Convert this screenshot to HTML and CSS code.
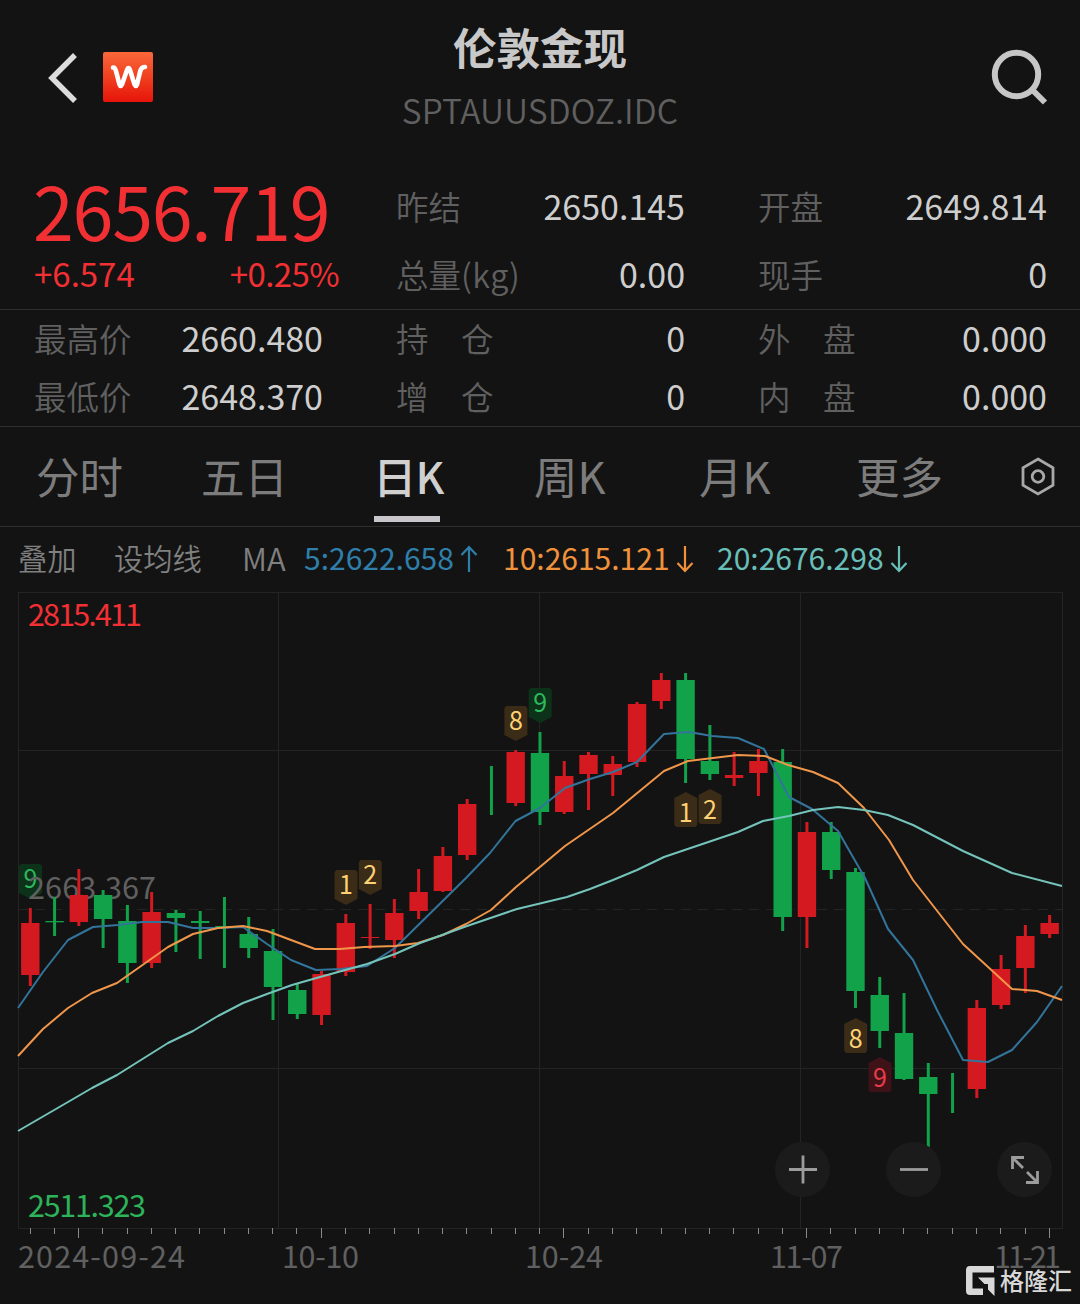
FILE: index.html
```
<!DOCTYPE html>
<html lang="zh-CN">
<head>
    <meta charset="UTF-8">
    <meta name="viewport" content="width=device-width, initial-scale=1.0">
    <title>伦敦金现 SPTAUUSDOZ.IDC</title>
    <link rel="stylesheet" href="styles.css">
</head>
<body>
    <header class="header">
        <div class="header-left">
            <svg class="back" width="32" height="54" viewBox="0 0 32 54">
                <path d="M29 5 L6 28 L29 51" />
            </svg>
            <div class="logo">
                <svg width="50" height="50" viewBox="0 0 50 50">
                    <path d="M10 15.500 C12.500 15 12.500 18 13.500 21 L16.500 32.500 Q17.500 35.500 19 32.500 L24 18 Q25.500 14 27 18 L31.500 32.500 Q33 35.500 34 32.500 L37 20 Q38.300 14.500 42 15" />
                </svg>
            </div>
        </div>
        <div class="header-title">
            <h1>伦敦金现</h1>
            <p>SPTAUUSDOZ.IDC</p>
        </div>
        <svg class="search" width="60" height="60" viewBox="0 0 60 60">
            <circle cx="28.500" cy="26.500" r="21.700" />
            <path d="M43.500 41 L57 54.500" />
        </svg>
    </header>

    <section class="quote quote-main">
        <div class="price-box">
            <div class="price">2656.719</div>
            <div class="change"><span>+6.574</span><span class="percent">+0.25%</span></div>
        </div>
        <div class="item"><span class="label">昨结</span><span class="value">2650.145</span></div>
        <div class="item"><span class="label">开盘</span><span class="value">2649.814</span></div>
        <div class="item"><span class="label">总量<span class="unit">(kg)</span></span><span class="value">0.00</span></div>
        <div class="item"><span class="label">现手</span><span class="value">0</span></div>
    </section>

    <section class="quote quote-more">
        <div class="item"><span class="label">最高价</span><span class="value">2660.480</span></div>
        <div class="item"><span class="label">持　仓</span><span class="value">0</span></div>
        <div class="item"><span class="label">外　盘</span><span class="value">0.000</span></div>
        <div class="item"><span class="label">最低价</span><span class="value">2648.370</span></div>
        <div class="item"><span class="label">增　仓</span><span class="value">0</span></div>
        <div class="item"><span class="label">内　盘</span><span class="value">0.000</span></div>
    </section>

    <nav class="tabs">
        <span class="tab">分时</span>
        <span class="tab">五日</span>
        <span class="tab active">日K</span>
        <span class="tab">周K</span>
        <span class="tab">月K</span>
        <span class="tab">更多</span>
        <svg class="settings" width="36" height="42" viewBox="0 0 36 42">
            <path d="M18 3 L33 11.800 V29.200 L18 38 L3 29.200 V11.800 Z" />
            <circle cx="18" cy="20.500" r="5.800" />
        </svg>
    </nav>

    <div class="ma-bar">
        <span class="ma-btn">叠加</span>
        <span class="ma-btn ma-set">设均线</span>
        <span class="ma-btn ma-name">MA</span>
        <span class="ma ma5">5:2622.658<svg width="18" height="28" viewBox="0 0 18 28"><path d="M9 27 V2 M1.500 10 L9 2 L16.500 10" /></svg></span>
        <span class="ma ma10">10:2615.121<svg width="18" height="28" viewBox="0 0 18 28"><path d="M9 1 V26 M1.500 18 L9 26 L16.500 18" /></svg></span>
        <span class="ma ma20">20:2676.298<svg width="18" height="28" viewBox="0 0 18 28"><path d="M9 1 V26 M1.500 18 L9 26 L16.500 18" /></svg></span>
    </div>

    <main class="chart-box">
        <svg id="chart" width="1080" height="713" viewBox="0 591 1080 713"></svg>

        <div class="controls">
            <button type="button"><svg width="30" height="30" viewBox="0 0 30 30"><path d="M1 14.500 H29 M15 0.500 V28.500" /></svg></button>
            <button type="button"><svg width="30" height="30" viewBox="0 0 30 30"><path d="M1 14.500 H29" /></svg></button>
            <button type="button"><svg width="30" height="30" viewBox="0 0 30 30"><path d="M14 2.500 H2.500 V14 M2.500 2.500 L13 13 M16 27.500 H27.500 V16 M27.500 27.500 L17 17" /></svg></button>
        </div>

        <div class="watermark">
            <svg width="29" height="30" viewBox="0 0 29 30">
                <path d="M4 0 H28 V6.500 H6.500 V22.500 H17 V29 H4 Q0 29 0 25 V4 Q0 0 4 0 Z" />
                <path d="M12 11.500 H28.500 V30 L22 23.500 V18 H18.500 Z" />
            </svg>
            <span>格隆汇</span>
        </div>
    </main>

    <script src="script.js"></script>
</body>
</html>
```
FILE: styles.css
```
* {
    box-sizing: border-box;
}

body {
    margin: 0;
    width: 1080px;
    height: 1304px;
    overflow: hidden;
    background: #131313;
    color: #cecece;
    font-family: "Noto Sans CJK SC", "Noto Sans", sans-serif;
}

svg {
    display: block;
    fill: none;
}

/* header */
.header {
    display: grid;
    grid-template-columns: 300px 1fr 300px;
    height: 173px;
    padding-top: 16px;
}

.header-left {
    display: flex;
    align-items: center;
    height: 122px;
    padding-left: 46px;
    gap: 25px;
}

.back path {
    stroke: #dcdcdc;
    stroke-width: 5.5;
}

.logo {
    width: 50px;
    height: 50px;
    border-radius: 2px;
    background: linear-gradient(#f9683a, #f0401f 50%, #e6140a);
}

.logo path {
    stroke: #fff;
    stroke-width: 4.6;
    stroke-linecap: round;
}

.header-title {
    text-align: center;
}

.header-title h1 {
    margin: 0;
    font-size: 43.5px;
    line-height: 62px;
    font-weight: 700;
    color: #c8c8c8;
}

.header-title p {
    margin: 7px 0 0;
    font-size: 33.5px;
    line-height: 50px;
    font-weight: 350;
    letter-spacing: 0.1px;
    color: #606060;
}

.search {
    justify-self: end;
    margin: 32px 32px 0 0;
    stroke: #c6c6c6;
    stroke-width: 6;
}

/* quotes */
.quote {
    display: grid;
    grid-template-columns: repeat(3, 289px);
    column-gap: 73px;
    padding-left: 34px;
    border-bottom: 1px solid #2e2e2e;
}

.quote-main {
    grid-template-rows: 68px 68px;
}

.quote-more {
    grid-template-rows: 58px 58px;
}

.price-box {
    grid-row: span 2;
    width: 305px;
    color: #f23034;
}

.price {
    height: 76px;
    font-size: 73.5px;
    line-height: 73px;
    letter-spacing: -1.2px;
    margin-left: -1px;
}

.change {
    display: flex;
    justify-content: space-between;
    font-size: 33px;
    line-height: 49px;
}

.percent {
    letter-spacing: -0.6px;
}

.item {
    display: flex;
    justify-content: space-between;
    align-items: center;
    padding-bottom: 4px;
}

.label {
    font-size: 32.5px;
    font-weight: 350;
    color: #606060;
}

.unit {
    letter-spacing: 0.6px;
}

.value {
    font-size: 34px;
}

/* period tabs */
.tabs {
    display: grid;
    grid-template-columns: 165px 173px 160px 165px 157px 163px auto;
    height: 100px;
    padding-left: 36px;
    border-bottom: 1px solid #2e2e2e;
}

.tab {
    justify-self: start;
    height: 95px;
    font-size: 43.5px;
    line-height: 98px;
    color: #7c7c7c;
}

.tab.active {
    color: #d0d0d0;
    font-weight: 500;
    width: 66px;
    white-space: nowrap;
    letter-spacing: -1px;
    text-indent: -1px;
    border-bottom: 6px solid #c8c6ca;
}

.settings {
    margin: 29px 0 0 1px;
    stroke: #a8a8a8;
    stroke-width: 2.8;
}

/* moving averages */
.ma-bar {
    display: flex;
    align-items: center;
    height: 64px;
    padding: 0 0 4px 18px;
    font-size: 30px;
    white-space: nowrap;
}

.ma-btn {
    width: 96px;
    font-size: 29.3px;
    font-weight: 350;
    color: #808080;
}

.ma-set {
    width: 128px;
}

.ma-name {
    width: 62px;
    font-size: 31px;
}

.ma {
    display: flex;
    align-items: center;
    gap: 6px;
}

.ma svg {
    margin-top: 3px;
}

.ma path {
    stroke: currentColor;
    stroke-width: 2.2;
}

.ma5 {
    width: 199px;
    color: #2f7fab;
}

.ma10 {
    width: 214px;
    color: #f0923c;
}

.ma20 {
    color: #68bfb8;
}

/* chart */
.chart-box {
    position: relative;
    height: 713px;
}

.grid {
    stroke: #242424;
}

.grid-dash {
    stroke: #242424;
    stroke-dasharray: 10 7;
}

.tick {
    stroke: #8a8a8a;
}

.up {
    fill: #d41a20;
}

.down {
    fill: #11a24a;
}

.line {
    stroke-width: 2;
    stroke-linejoin: round;
}

.line-ma5 {
    stroke: #33749b;
}

.line-ma10 {
    stroke: #f0964a;
}

.line-ma20 {
    stroke: #74c4bb;
}

.axis {
    font-size: 30.5px;
    fill: #606060;
}

.axis-high {
    fill: #f23034;
}

.axis-low {
    fill: #2db35a;
}

.mark {
    font-size: 25px;
    text-anchor: middle;
}

.mark-bg-yellow {
    fill: #3a2c17;
}

.mark-bg-green {
    fill: #0c3219;
}

.mark-bg-red {
    fill: #3f1218;
}

.mark-yellow {
    fill: #ffd175;
}

.mark-green {
    fill: #2fb85c;
}

.mark-red {
    fill: #e93b48;
}

/* buttons floating over the chart */
.controls {
    position: absolute;
    left: 775px;
    top: 551px;
    width: 277px;
    display: flex;
    justify-content: space-between;
}

.controls button {
    display: flex;
    align-items: center;
    justify-content: center;
    width: 55px;
    height: 55px;
    padding: 0;
    border: none;
    border-radius: 50%;
    background: #1b1b1b;
}

.controls path {
    stroke: #9c9c9c;
    stroke-width: 2.8;
}

.watermark {
    position: absolute;
    right: 8px;
    bottom: 7px;
    display: flex;
    align-items: center;
    gap: 5px;
    font-size: 24px;
    line-height: 34px;
    font-weight: 500;
    color: #d8d8d8;
}

.watermark svg {
    margin-top: 2px;
    fill: #d8d8d8;
}
```
FILE: script.js
```
const LEFT = 18, RIGHT = 1062, TOP = 592.5, BOTTOM = 1228.5;
const FIRST = 30, STEP = 24.27;

// [up, high, low, body top, body bottom]
const candles = [
    [1, 908, 986, 923, 975], [0, 897, 936, 921, 922.3], [1, 869, 926, 895, 922], [0, 890, 948, 895, 919],
    [0, 905, 983, 921, 963], [1, 892, 968, 912, 963], [0, 910, 952, 913, 918], [0, 911, 959, 921, 923],
    [0, 897, 968, 926, 927.5], [0, 917, 958, 934, 948], [0, 929, 1020, 951, 987], [0, 983, 1019, 990, 1014],
    [1, 971, 1025, 974, 1015], [1, 914, 976, 923, 972], [1, 904, 949, 937, 938], [1, 899, 958, 913, 940],
    [1, 869, 919, 892, 911], [1, 847, 892, 856, 891], [1, 799, 860, 804, 855], [0, 766, 815, 804, 804],
    [1, 750, 806, 752, 803], [0, 732, 825, 753, 812], [1, 761, 814, 776, 812], [1, 752, 810, 755, 774],
    [1, 756, 796, 764, 775], [1, 702, 767, 704, 762], [1, 673, 709, 680, 701], [0, 673, 783, 680, 759],
    [0, 725, 780, 761, 774], [1, 752, 786, 775, 778], [1, 749, 796, 761, 773], [0, 749, 931, 762, 917],
    [1, 822, 948, 832, 917], [0, 822, 879, 832, 870], [0, 868, 1008, 872, 991], [0, 977, 1048, 995, 1031],
    [0, 993, 1080, 1033, 1079], [0, 1063, 1147, 1077, 1094], [0, 1073, 1113, 1097, 1097], [1, 1000, 1098, 1008, 1089],
    [1, 955, 1009, 969, 1005], [1, 925, 993, 936, 968], [1, 915, 938, 923, 934]
];

const averages = {
    ma5: "18,1008 43,972 68,940 93,927 118,925 142,922 168,922 193,928 218,928 243,927 267,944 291,960 316,970 341,969 367,966 395,948 466,878 490,853 515.500,821 540,808 565,788 590,779 613,772 637,762 664,734 689,732 712,736 738,738 764,749 789,797 812,809 838,831 865,878 888,929 913,960 937,1010 963,1060 988,1062 1012,1050 1037,1022 1062,986",
    ma10: "18,1056 43,1029 68,1008 92,993 117,983 168,947 193,934 218,928 243,926 267,931 315,949 340,949 364,947 395,946 418,943 443,935 466,924 491,910 516,887 565,846 613,813 664,771 688,761 738,755 765,756 788,765 813,772 838,783 864,808 889,840 913,880 963,944 987,966 1012,989 1037,991 1062,1000",
    ma20: "18,1131 68,1102 92,1088 117,1075 168,1043 193,1031 218,1016 243,1003 267,994 292,985 320,977 367,964 395,954 420,943 467,926 517,909 567,897 590,889 613,880 637,870 664,857 738,832 763,821 789,816 813,810 838,807 864,810 888,815 913,825 963,851 1012,873 1062,886"
};

// [candle index, top, text, color, points down]
const marks = [
    [0, 864, "9", "green", 1], [13, 870, "1", "yellow", 1], [14, 860, "2", "yellow", 1],
    [20, 706, "8", "yellow", 1], [21, 688, "9", "green", 1], [27, 792, "1", "yellow", 0],
    [28, 789, "2", "yellow", 0], [34, 1018, "8", "yellow", 0], [35, 1057, "9", "red", 0]
];

function text(x, y, str, width, cls) {
    return `<text class="axis ${cls}" x="${x}" y="${y}" textLength="${width}">${str}</text>`;
}

let svg = "";

// grid
svg += `<rect class="grid" x="18.500" y="${TOP}" width="1044" height="${BOTTOM - TOP}" />`;
[278.5, 539.5, 800.5].forEach(x => {
    svg += `<path class="grid" d="M${x} ${TOP} V${BOTTOM}" />`;
});
[750.5, 1068.5].forEach(y => {
    svg += `<path class="grid" d="M${LEFT} ${y} H${RIGHT}" />`;
});
svg += `<path class="grid-dash" d="M${LEFT} 909.5 H${RIGHT}" />`;

// date ticks, a longer one every 10 days
candles.forEach((c, i) => {
    const x = Math.floor(FIRST + i * STEP) + 0.5;
    svg += `<path class="tick" d="M${x} 1228 V${i % 10 === 2 ? 1238 : 1234}" />`;
});

marks.forEach(([i, top, label, color, down]) => {
    const x = FIRST + i * STEP + 0.5;
    const l = x - 11.5, r = x + 11.5;
    const shape = down
        ? `M${l + 2} ${top} H${r - 2} L${r} ${top + 2} V${top + 29} L${x} ${top + 35} L${l} ${top + 29} V${top + 2} Z`
        : `M${x} ${top} L${r} ${top + 6} V${top + 33} L${r - 2} ${top + 35} H${l + 2} L${l} ${top + 33} V${top + 6} Z`;
    svg += `<path class="mark-bg-${color}" d="${shape}" />`;
    svg += `<text class="mark mark-${color}" x="${x}" y="${top + (down ? 24 : 30)}">${label}</text>`;
});

svg += text(28, 899, "2663.367", 128, "");

candles.forEach(([up, high, low, top, bottom], i) => {
    const x = FIRST + i * STEP + 0.3;
    const cls = up ? "up" : "down";
    svg += `<rect class="${cls}" x="${x - 1.5}" y="${high}" width="3" height="${low - high}" />`;
    svg += `<rect class="${cls}" x="${x - 9.2}" y="${top}" width="18.4" height="${bottom - top}" />`;
});

Object.keys(averages).forEach(name => {
    svg += `<polyline class="line line-${name}" points="${averages[name]}" />`;
});

svg += text(28, 626, "2815.411", 114, "axis-high");
svg += text(28, 1217, "2511.323", 118, "axis-low");
svg += text(18, 1268, "2024-09-24", 167, "");
svg += text(282, 1268, "10-10", 77, "");
svg += text(525, 1268, "10-24", 78, "");
svg += text(770, 1268, "11-07", 73, "");
svg += text(994, 1268, "11-21", 67, "");

document.getElementById("chart").innerHTML = svg;
```
